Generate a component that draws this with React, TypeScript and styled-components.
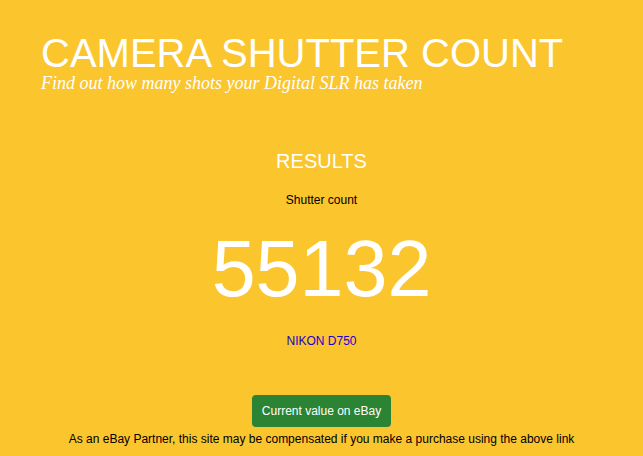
import React from "react"
import styled, { createGlobalStyle } from "styled-components"

const GlobalStyle = createGlobalStyle`
  html, body {
    margin: 0;
    padding: 0;
    background: #fbc52e;
  }
  body {
    font-family: "Liberation Sans", Arial, sans-serif;
  }
`

const App: React.FC = () => {
  return (
    <Page>
      <GlobalStyle />
      <Header>
        <Title>CAMERA SHUTTER COUNT</Title>
        <Tagline>Find out how many shots your Digital SLR has taken</Tagline>
      </Header>
      <Results>
        <ResultsHeading>RESULTS</ResultsHeading>
        <Label>Shutter count</Label>
        <Count>55132</Count>
        <Model href="#">NIKON D750</Model>
        <EbayButton>Current value on eBay</EbayButton>
        <Disclaimer>
          As an eBay Partner, this site may be compensated if you make a purchase using the above link
        </Disclaimer>
      </Results>
    </Page>
  )
}

const Page = styled.div`
  width: 643px;
  height: 456px;
  overflow: hidden;
  background: #fbc52e;
`

const Header = styled.header`
  padding: 32px 0 0 41px;
`

const Title = styled.h1`
  margin: 0;
  font-family: "Liberation Sans", Arial, sans-serif;
  font-weight: normal;
  font-size: 40px;
  line-height: 42px;
  color: #fff;
`

const Tagline = styled.p`
  margin: 0;
  font-family: "Liberation Serif", "Times New Roman", serif;
  font-style: italic;
  font-size: 18px;
  line-height: 18px;
  color: #fff;
`

const Results = styled.section`
  display: flex;
  flex-direction: column;
  align-items: center;
  padding-top: 57px;
`

const ResultsHeading = styled.h2`
  margin: 0;
  font-weight: normal;
  font-size: 20px;
  line-height: 24px;
  color: #fff;
`

const Label = styled.p`
  margin: 20px 0 0;
  font-size: 12px;
  line-height: 14px;
  color: #000;
`

const Count = styled.div`
  margin-top: 16px;
  font-size: 79px;
  line-height: 92px;
  color: #fff;
`

const Model = styled.a`
  margin-top: 19px;
  font-size: 12px;
  line-height: 14px;
  color: #2200cc;
  text-decoration: none;
`

const EbayButton = styled.button`
  margin-top: 47px;
  padding: 0 10px;
  height: 32px;
  border: none;
  border-radius: 4px;
  background: #2a8433;
  color: #fff;
  font-family: "Liberation Sans", Arial, sans-serif;
  font-size: 12px;
  font-weight: normal;
  cursor: pointer;
`

const Disclaimer = styled.p`
  margin: 5px 0 0;
  font-size: 12px;
  line-height: 14px;
  color: #000;
`

export default App
